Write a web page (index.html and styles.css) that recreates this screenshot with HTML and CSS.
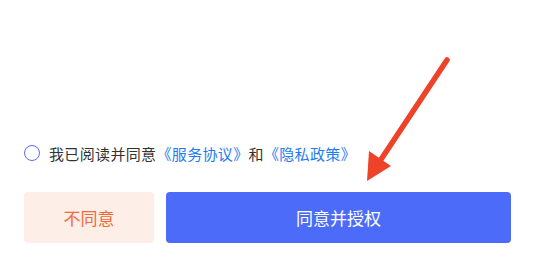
FILE: index.html
```html
<!DOCTYPE html>
<html lang="zh-CN">
<head>
  <meta charset="UTF-8">
  <meta name="viewport" content="width=device-width, initial-scale=1.0">
  <title>授权</title>
  <link rel="stylesheet" href="styles.css">
</head>
<body>
  <div class="pagina">
    <div class="acuerdo">
      <span class="circulo"></span>
      <span class="texto">我已阅读并同意<a class="enlace">《服务协议》</a>和<a class="enlace">《隐私政策》</a></span>
    </div>
    <div class="botones">
      <button class="btn-no">不同意</button>
      <button class="btn-si">同意并授权</button>
    </div>
  </div>

  <!-- flecha roja encima -->
  <svg class="flecha" width="535" height="279" viewBox="0 0 535 279">
    <line x1="447" y1="60" x2="374" y2="170" stroke="#ee4328" stroke-width="5.5" stroke-linecap="round"/>
    <polygon points="367,181 369,151 391,166" fill="#ee4328"/>
  </svg>
</body>
</html>
```

FILE: styles.css
```css
body {
  margin: 0;
  background: #fff;
  font-family: "Noto Sans CJK SC", "Noto Sans", sans-serif;
}

.pagina {
  height: 100vh;
  display: flex;
  flex-direction: column;
  justify-content: flex-end;
  padding: 0 24px 36px;
  box-sizing: border-box;
}

.acuerdo {
  display: flex;
  align-items: center;
  height: 22px;
  margin-bottom: 28px;
}

.circulo {
  width: 14px;
  height: 14px;
  border: 1.5px solid #5b6cf5;
  border-radius: 50%;
  margin-right: 9px;
  flex-shrink: 0;
}

.texto {
  font-size: 15px;
  letter-spacing: 0.35px;
  color: #333;
  white-space: nowrap;
}

.enlace {
  color: #1e7cf0;
  text-decoration: none;
}

.botones {
  display: flex;
  gap: 12px;
}

button {
  border: none;
  border-radius: 4px;
  height: 51px;
  font-family: inherit;
  font-size: 17px;
  cursor: pointer;
}

.btn-no {
  width: 130px;
  background-color: #feeee8;
  color: #f2693a;
}

.btn-si {
  flex: 1;
  background-color: #4c6bf8;
  color: #fff;
}

.flecha {
  position: absolute;
  top: 0;
  left: 0;
  pointer-events: none;
}
```
